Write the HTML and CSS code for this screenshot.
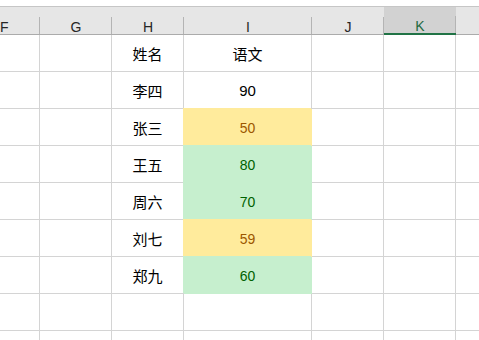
FILE: index.html
```html
<!DOCTYPE html>
<html lang="zh">
<head>
<meta charset="utf-8">
<link rel="stylesheet" href="styles.css">
</head>
<body>
<div class="sheet">
  <div class="grid">
    <div class="ch first">F</div>
    <div class="ch">G</div>
    <div class="ch">H</div>
    <div class="ch">I</div>
    <div class="ch">J</div>
    <div class="ch sel">K</div>
    <div class="ch"></div>

    <div class="c"></div><div class="c"></div><div class="c">姓名</div><div class="c">语文</div><div class="c"></div><div class="c"></div><div class="c"></div>
    <div class="c"></div><div class="c"></div><div class="c">李四</div><div class="c">90</div><div class="c"></div><div class="c"></div><div class="c"></div>
    <div class="c"></div><div class="c"></div><div class="c">张三</div><div class="c bad">50</div><div class="c"></div><div class="c"></div><div class="c"></div>
    <div class="c"></div><div class="c"></div><div class="c">王五</div><div class="c good">80</div><div class="c"></div><div class="c"></div><div class="c"></div>
    <div class="c"></div><div class="c"></div><div class="c">周六</div><div class="c good">70</div><div class="c"></div><div class="c"></div><div class="c"></div>
    <div class="c"></div><div class="c"></div><div class="c">刘七</div><div class="c bad">59</div><div class="c"></div><div class="c"></div><div class="c"></div>
    <div class="c"></div><div class="c"></div><div class="c">郑九</div><div class="c good">60</div><div class="c"></div><div class="c"></div><div class="c"></div>
    <div class="c"></div><div class="c"></div><div class="c"></div><div class="c"></div><div class="c"></div><div class="c"></div><div class="c"></div>
    <div class="c"></div><div class="c"></div><div class="c"></div><div class="c"></div><div class="c"></div><div class="c"></div><div class="c"></div>
  </div>
</div>
</body>
</html>
```
FILE: styles.css
```css
html, body {
  margin: 0;
  padding: 0;
  background: #ffffff;
  overflow: hidden;
}
body {
  width: 479px;
  height: 340px;
}
.sheet {
  padding-top: 6px;
}
.grid {
  display: grid;
  grid-template-columns: 40px 72px 72px 128px 72px 72px 24px;
  grid-template-rows: 28px repeat(8, 37px) 10px;
  width: 480px;
  border-top: 1px solid #c6c6c6;
  font-family: "Liberation Sans", "Noto Sans CJK SC", sans-serif;
}
.ch {
  box-sizing: border-box;
  background: linear-gradient(#b4b4b4, #b4b4b4) right bottom / 1px 17px no-repeat, #e6e6e6;
  border-bottom: 1px solid #ababab;
  display: flex;
  justify-content: center;
  align-items: flex-end;
  font-size: 14px;
  line-height: 14px;
  color: #262626;
}
.ch.first {
  justify-content: flex-start;
  padding-left: 0;
}
.ch.sel {
  background: linear-gradient(#b4b4b4, #b4b4b4) right bottom / 1px 17px no-repeat, #d2d2d2;
  border-bottom: 2px solid #217346;
  color: #1f6a40;
}
.c {
  box-sizing: border-box;
  border-right: 1px solid #d4d4d4;
  border-bottom: 1px solid #d4d4d4;
  display: flex;
  justify-content: center;
  align-items: center;
  font-size: 15px;
  color: #000000;
}
.bad {
  background: #ffeb9c;
  border-color: #ffeb9c;
  box-shadow: -1px -1px 0 #ffeb9c;
  color: #9c5700;
  font-size: 14px;
  padding-top: 1px;
}
.good {
  background: #c6efce;
  border-color: #c6efce;
  box-shadow: -1px -1px 0 #c6efce;
  color: #006100;
  font-size: 14px;
  padding-top: 1px;
}
```
